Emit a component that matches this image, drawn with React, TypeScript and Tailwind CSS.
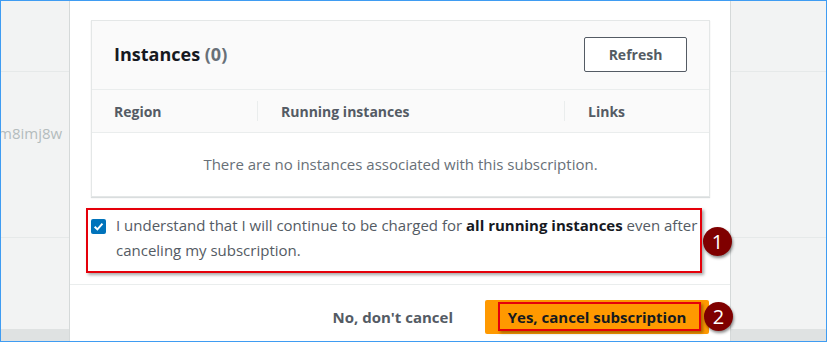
import React from "react";

const font = { fontFamily: '"Open Sans", "Noto Sans", Arial, sans-serif' };

function Badge({ n }: { n: string }) {
  return (
    <div className="flex h-[29px] w-[29px] items-center justify-center rounded-full bg-[#7f0000] text-[20px] leading-none text-white shadow-[1px_2px_3px_rgba(0,0,0,0.45)]">
      {n}
    </div>
  );
}

export default function App() {
  return (
    <div
      className="flex h-[342px] w-[827px] overflow-hidden border border-[#3f9cf2] bg-[#f2f3f3]"
      style={font}
    >
      {/* left side panel */}
      <div className="flex w-[68px] shrink-0 flex-col">
        <div className="h-[71px] border-b border-[#e6e9e9]" />
        <div className="h-[166px] overflow-hidden border-b border-[#e6e9e9]">
          <div className="ml-[-3px] mt-[50px] whitespace-nowrap text-[15px] text-[#b4bcbd]">m8imj8w</div>
        </div>
        <div className="flex-1" />
        <div className="h-[12px] bg-[#dfe2e2]" />
      </div>

      {/* modal */}
      <div className="relative flex w-[662px] shrink-0 flex-col border-x border-[#d5d9d9] bg-white">
        <div className="ml-[21px] mr-[20px] mt-[19px] border border-[#e4e7e7] shadow-[0_1px_1px_rgba(0,28,36,0.15)]">
          <div className="flex h-[69px] items-start justify-between border-b border-[#eaeded] bg-[#fafafa] pl-[22px] pr-[22px]">
            <div className="mt-[19px] text-[18px] leading-[28px] font-bold text-[#16191f]">
              Instances <span className="font-bold text-[#687078]">(0)</span>
            </div>
            <button className="mt-[16px] h-[35px] w-[103px] rounded-[2px] border border-[#545b64] bg-white text-[14px] font-bold text-[#545b64]">
              Refresh
            </button>
          </div>
          <div className="flex h-[43px] items-center border-b border-[#eaeded] bg-[#fafafa] text-[14px] font-bold text-[#545b64]">
            <div className="w-[165px] pl-[22px]">Region</div>
            <div className="h-[20px] w-px bg-[#eaeded]" />
            <div className="w-[306px] pl-[23px]">Running instances</div>
            <div className="h-[20px] w-px bg-[#eaeded]" />
            <div className="pl-[23px]">Links</div>
          </div>
          <div className="flex h-[63px] items-center justify-center text-[15px] text-[#687078]">
            There are no instances associated with this subscription.
          </div>
        </div>

        {/* checkbox row */}
        <div className="ml-[21px] mr-[26px] mt-[16px] flex items-start gap-[10px]">
          <div className="mt-[6px] flex h-[15px] w-[15px] shrink-0 items-center justify-center rounded-[2px] bg-[#0073bb]">
            <svg width="11" height="11" viewBox="0 0 10 10">
              <path d="M1.5 5.2 L4 7.6 L8.6 2.4" fill="none" stroke="white" strokeWidth="1.8" />
            </svg>
          </div>
          <p className="text-[15px] leading-[25px] text-[#545b64]">
            I understand that I will continue to be charged for{" "}
            <b className="text-[#16191f]">all running instances</b> even after canceling my subscription.
          </p>
        </div>

        {/* annotation box 1 */}
        <div className="pointer-events-none absolute left-[16px] top-[207px] h-[65px] w-[616px] border-2 border-[#e5000a] shadow-[2px_2px_3px_rgba(0,0,0,0.35)]" />
        <div className="absolute left-[633px] top-[226px]">
          <Badge n="1" />
        </div>

        {/* footer */}
        <div className="mt-[21px] flex items-center justify-end border-t border-[#eaeded] pr-[21px] pt-[15px]">
          <button className="mr-[32px] text-[15px] font-bold text-[#545b64]">No, don&apos;t cancel</button>
          <button className="relative h-[34px] w-[224px] rounded-[2px] bg-[#ff9900] text-[15px] font-bold text-[#16191f]">
            Yes, cancel subscription
            <span className="pointer-events-none absolute bottom-[3px] left-[13px] right-[8px] top-[2px] border-2 border-[#e5000a] shadow-[2px_2px_3px_rgba(0,0,0,0.35)]" />
          </button>
        </div>
        <div className="absolute left-[634px] top-[301px]">
          <Badge n="2" />
        </div>
      </div>

      {/* right side panel */}
      <div className="flex flex-1 flex-col">
        <div className="h-[71px] border-b border-[#e6e9e9]" />
        <div className="h-[166px] border-b border-[#e6e9e9]" />
        <div className="flex-1" />
        <div className="h-[12px] bg-[#dfe2e2]" />
      </div>
    </div>
  );
}
